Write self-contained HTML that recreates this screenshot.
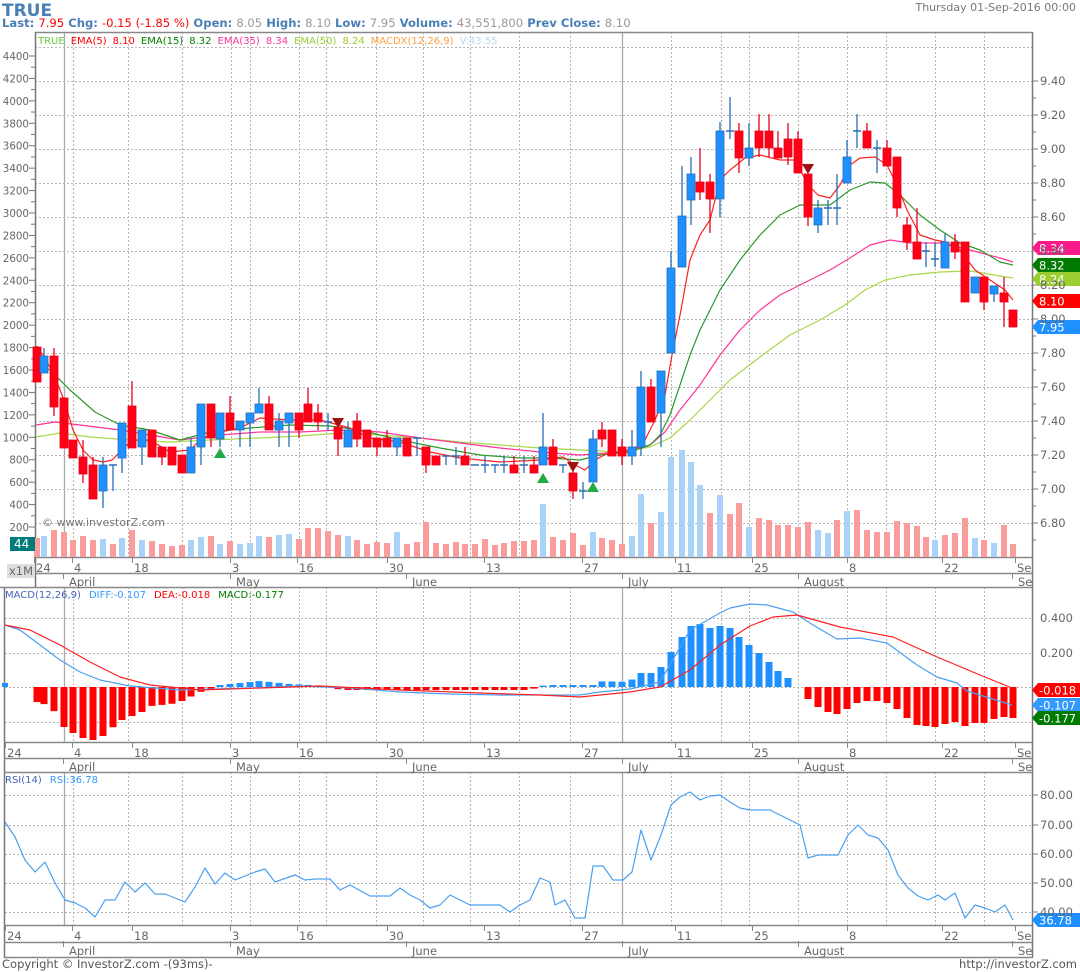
<!DOCTYPE html>
<html><head><meta charset="utf-8">
<style>
html,body{margin:0;padding:0;background:#fff;width:1080px;height:972px;overflow:hidden}
svg{display:block;font-family:"DejaVu Sans","Liberation Sans",sans-serif}
</style></head>
<body>
<svg id="s" width="1080" height="972" viewBox="0 0 1080 972" xmlns="http://www.w3.org/2000/svg">
<g id="grid"></g>
<g id="draw"></g>
<!-- header -->
<text x="2" y="16" font-size="17" font-weight="bold" fill="#4a7fb5">TRUE</text>
<text x="2" y="27" font-size="11.6" font-weight="bold" fill="#4a7fb5">Last: <tspan fill="#f00" font-weight="normal">7.95</tspan> Chg: <tspan fill="#f00" font-weight="normal">-0.15 (-1.85 %)</tspan> Open: <tspan fill="#999" font-weight="normal">8.05</tspan> High: <tspan fill="#999" font-weight="normal">8.10</tspan> Low: <tspan fill="#999" font-weight="normal">7.95</tspan> Volume: <tspan fill="#999" font-weight="normal">43,551,800</tspan> Prev Close: <tspan fill="#999" font-weight="normal">8.10</tspan></text>
<text x="1076" y="11" font-size="11" fill="#777" text-anchor="end">Thursday 01-Sep-2016 00:00</text>
<!-- legend -->
<text x="38" y="44" font-size="10"><tspan fill="#66cc33">TRUE</tspan><tspan fill="#f00" dx="6">EMA(5)</tspan><tspan fill="#f00" dx="6">8.10</tspan><tspan fill="#008000" dx="6">EMA(15)</tspan><tspan fill="#008000" dx="6">8.32</tspan><tspan fill="#ff3399" dx="6">EMA(35)</tspan><tspan fill="#ff3399" dx="6">8.34</tspan><tspan fill="#9acd32" dx="6">EMA(50)</tspan><tspan fill="#9acd32" dx="6">8.24</tspan><tspan fill="#ffa040" dx="6">MACDX(12,26,9)</tspan><tspan fill="#b8d8e8" dx="6">V:43.55</tspan></text>
<text x="42" y="526" font-size="11" fill="#777">© www.investorZ.com</text>
<text x="5" y="598" font-size="10"><tspan fill="#4466bb">MACD(12,26,9)</tspan><tspan fill="#3399ff" dx="8">DIFF:-0.107</tspan><tspan fill="#f00" dx="8">DEA:-0.018</tspan><tspan fill="#008000" dx="8">MACD:-0.177</tspan></text>
<text x="5" y="783" font-size="10"><tspan fill="#4466bb">RSI(14)</tspan><tspan fill="#3399ff" dx="8">RSI:36.78</tspan></text>
<g id="labels" font-size="11.5" fill="#666"></g>
<g id="llabels" font-size="10.3" fill="#666"></g>
<text x="2" y="968" font-size="11.5" fill="#555">Copyright © InvestorZ.com  -(93ms)-</text>
<text x="1077" y="968" font-size="11.5" fill="#555" text-anchor="end">http://investorZ.com</text>
</svg>
<script>
var NS="http://www.w3.org/2000/svg";
function el(p,t,a,txt){var e=document.createElementNS(NS,t);for(var k in a)e.setAttribute(k,a[k]);if(txt!=null)e.textContent=txt;document.getElementById(p).appendChild(e);return e;}
function line(p,x1,y1,x2,y2,c,w,d){var a={x1:x1,y1:y1,x2:x2,y2:y2,stroke:c,"stroke-width":w||1};if(d)a["stroke-dasharray"]=d;return el(p,"line",a);}
function txt(x,y,s,anchor,fill,g){var a={x:x,y:y};if(anchor)a["text-anchor"]=anchor;if(fill)a.fill=fill;return el(g||"labels","text",a,s);}
var G="#b4b4b4",DS="2,2",B="#888";
var vg=[73,128,182,231,250,299,326,376,423,470,519,570,671,721,749,798,847,886,935,984];
var panels=[[32,557],[587,742],[772,925]];
panels.forEach(function(p){vg.forEach(function(x){line("grid",x+.5,p[0],x+.5,p[1],G,1,DS);});
 [64,622].forEach(function(x){line("grid",x+.5,p[0],x+.5,p[1],"#aaa",1.3);});});
for(var y=47;y<=523;y+=34)line("grid",35,y+.5,1032,y+.5,G,1,DS);
[618,653,687,722].forEach(function(y){line("grid",5,y+.5,1032,y+.5,G,1,DS);});
[795,825,854,883,912].forEach(function(y){line("grid",5,y+.5,1032,y+.5,G,1,DS);});
line("grid",35,32.5,1032,32.5,B,1.5);
line("grid",35.5,32,35.5,587,"#777",1.5);
line("grid",1032.5,32,1032.5,958,"#777",1.5);
line("grid",35,557.5,1032,557.5,B,1.5);
line("grid",35,573.5,1032,573.5,B,1.5);
line("grid",0,587.5,1032,587.5,B,1.5);
line("grid",4.5,587,4.5,958,"#777",1.5);
[742,758,772,925,942,957].forEach(function(y){line("grid",4,y+.5,1032,y+.5,B,1.5);});
var dl=[[37,"24"],[75,"4"],[135,"18"],[233,"3"],[300,"16"],[390,"30"],[487,"13"],[585,"27"],[678,"11"],[755,"25"],[850,"8"],[945,"22"],[1018,"Se"]];
var ml=[[69,"April"],[236,"May"],[412,"June"],[628,"July"],[804,"August"],[1018,"Se"]];
[[557,571,585],[742,756,770],[925,939,954]].forEach(function(r,i){
 dl.forEach(function(d){var x=d[0];if(i>0&&d[1]=="24")x=8;line("grid",x-2.5,r[0],x-2.5,r[0]+6,B,1);txt(x-1,r[1]+1,d[1]);});
 ml.forEach(function(m){line("grid",m[0]-5.5,r[1]+2,m[0]-5.5,r[1]+8,B,1);txt(m[0],r[2]+1,m[1]);});
});
var vals=[4400,4200,4000,3800,3600,3400,3200,3000,2800,2600,2400,2200,2000,1800,1600,1400,1200,1000,800,600,400,200];
vals.forEach(function(v,i){var y=56+i*22.43;txt(29,y+4,String(v),"end",null,"llabels");line("grid",29,y,35,y,"#777",1);line("grid",31,y+11.2,35,y+11.2,"#777",1);});
var pr=["9.40","9.20","9.00","8.80","8.60","8.40","8.20","8.00","7.80","7.60","7.40","7.20","7.00","6.80"];
pr.forEach(function(p,i){var y=81+i*34;line("grid",1032,y,1038,y,"#777",1);line("grid",1032,y+17,1036,y+17,"#777",1);txt(1040,y+4,p);});
txt(1040,622,"0.400");txt(1040,657,"0.200");
["80.00","70.00","60.00","50.00","40.00"].forEach(function(p,i){var y=[795,825,854,883,912][i];line("grid",1032,y,1038,y,"#777",1);txt(1040,y+4,p);});
var C=[
[37,'r',347,382,346,382,538,'r'],[44,'b',356,373,348,373,536,'b'],[54,'r',356,407,348,416,530,'r'],[64,'r',398,448,398,448,532,'r'],
[73,'r',440,458,440,458,540,'r'],[83,'r',457,474,440,483,536,'r'],[93,'r',465,499,457,499,540,'r'],[103,'b',465,491,457,508,539,'b'],
[113,'c',465,465,465,491,544,'r'],[122,'b',423,458,423,473,538,'b'],[132,'r',406,448,381,448,530,'r'],[142,'b',430,447,430,465,540,'b'],
[152,'r',430,457,430,457,541,'r'],[162,'r',447,457,447,465,544,'r'],[172,'r',447,465,447,465,546,'r'],[182,'r',455,473,455,473,545,'r'],
[191,'b',447,473,438,473,540,'b'],[201,'b',404,447,404,465,537,'b'],[211,'r',404,438,404,447,536,'r'],[220,'b',413,439,413,447,544,'b'],
[230,'r',413,430,396,430,541,'r'],[240,'b',421,430,421,447,544,'b'],[250,'b',413,423,413,447,543,'b'],[259,'b',404,413,388,413,536,'b'],
[269,'r',404,430,396,430,537,'r'],[279,'b',421,430,413,447,535,'b'],[289,'b',413,423,413,447,534,'b'],[299,'r',413,430,413,438,539,'r'],
[308,'r',404,422,388,422,528,'r'],[318,'r',413,422,404,430,528,'r'],[328,'c',422,422,413,430,531,'r'],[338,'r',427,439,427,456,535,'r'],
[348,'b',430,447,422,447,536,'b'],[357,'r',421,439,413,447,540,'r'],[367,'r',430,447,430,447,544,'r'],[377,'r',438,447,438,456,542,'r'],
[387,'r',438,447,430,447,543,'r'],[397,'b',438,447,438,456,532,'b'],[407,'r',438,456,438,456,544,'r'],[417,'c',438,438,438,456,542,'r'],
[426,'r',447,465,447,473,522,'r'],[436,'r',456,465,456,465,543,'r'],[446,'c',456,456,456,465,544,'r'],[456,'c',456,456,447,465,542,'r'],
[465,'r',456,465,447,465,544,'r'],[475,'c',465,465,465,465,544,'r'],[485,'c',465,465,456,473,539,'r'],[495,'c',465,465,465,473,545,'r'],
[504,'c',465,465,456,473,543,'r'],[514,'r',465,473,456,473,541,'r'],[524,'c',465,465,456,473,541,'r'],[534,'r',465,473,456,473,540,'r'],
[543,'b',447,465,413,465,504,'b'],[553,'r',447,465,439,465,537,'r'],[563,'c',465,465,465,473,540,'r'],[573,'r',473,491,465,499,533,'r'],
[583,'c',491,491,482,499,545,'r'],[593,'b',439,482,430,482,532,'b'],[602,'r',430,439,422,447,538,'r'],[612,'r',430,456,430,456,540,'r'],
[622,'r',447,456,439,465,544,'r'],[632,'b',447,456,430,465,536,'b'],[641,'b',387,447,371,456,494,'b'],[651,'r',387,422,379,422,523,'r'],
[661,'b',371,413,371,447,512,'b'],[671,'b',268,353,251,353,457,'b'],[682,'b',216,267,166,267,450,'b'],[691,'b',174,200,157,225,462,'b'],
[700,'r',182,192,148,200,485,'b'],[710,'r',182,199,174,233,513,'r'],[720,'b',131,199,122,217,495,'b'],[730,'c',131,131,97,139,514,'r'],
[739,'r',131,158,123,173,503,'r'],[749,'b',148,158,123,166,527,'b'],[759,'r',131,148,114,157,518,'r'],[769,'r',131,148,114,157,520,'r'],
[778,'r',148,158,131,158,525,'r'],[788,'r',139,157,123,165,525,'r'],[798,'r',139,173,131,173,527,'r'],[808,'r',174,217,174,226,522,'r'],
[818,'b',208,225,200,233,530,'b'],[828,'c',208,208,200,225,533,'b'],[837,'c',208,208,174,225,520,'r'],[847,'b',157,183,140,183,511,'b'],
[857,'c',131,131,114,148,510,'r'],[867,'r',131,148,123,148,530,'r'],[877,'c',148,148,140,173,532,'r'],[887,'r',148,166,140,166,532,'r'],
[897,'r',157,208,157,217,521,'r'],[907,'r',225,242,217,250,523,'r'],[917,'r',242,259,208,259,526,'r'],[926,'c',251,251,242,267,537,'r'],
[935,'c',259,259,242,267,540,'b'],[945,'b',242,268,234,268,535,'r'],[955,'r',242,252,234,259,533,'r'],[965,'r',242,302,242,302,518,'r'],
[975,'b',277,293,277,293,538,'b'],[984,'r',277,302,277,310,540,'r'],[994,'b',286,294,286,302,543,'b'],[1004,'r',293,302,277,327,525,'r'],
[1013,'r',310,327,310,327,544,'r']];
C.forEach(function(c){el("draw","rect",{x:c[0]-3,y:c[6],width:6,height:557-c[6],fill:c[7]=='b'?'#a8d2f8':'#fb9c9c'});});
function poly(pts,col,w){el("draw","polyline",{points:pts.map(function(p){return p.join(",")}).join(" "),fill:"none",stroke:col,"stroke-width":w||1.2,"stroke-linejoin":"round"});}
poly([[36,437],[60,433],[90,437],[130,440],[170,442],[210,440],[260,438],[300,436],[340,433],[380,435],[420,438],[460,442],[500,445],[540,448],[580,450],[620,452],[650,447],[670,438],[690,420],[710,400],[730,380],[760,357],[790,335],[820,320],[845,305],[865,290],[885,280],[910,275],[940,272],[970,271],[1000,276],[1013,278]],"#a8d848");
poly([[36,425],[55,422],[80,425],[120,430],[150,435],[180,440],[220,435],[260,432],[300,432],[340,430],[380,432],[420,438],[460,443],[500,448],[540,452],[580,455],[620,452],[650,445],[665,432],[680,410],[700,385],[720,355],[740,330],[760,310],[780,295],[800,285],[830,270],[850,258],[870,245],[890,240],[910,243],[940,243],[970,250],[1000,258],[1013,262]],"#ff3399");
poly([[36,363],[50,370],[70,390],[95,412],[120,425],[150,430],[180,440],[210,432],[250,428],[290,425],[330,426],[360,430],[400,440],[440,448],[480,455],[520,458],[550,458],[580,460],[600,455],[630,452],[650,445],[660,435],[670,415],[680,385],[690,355],[700,330],[720,290],[740,260],[760,235],[780,215],[800,205],[830,205],[850,190],[870,182],[885,183],[900,195],[920,215],[940,230],[960,243],[980,250],[1000,262],[1013,265]],"#2a9a2a");
poly([[36,347],[44,356],[54,375],[64,400],[73,430],[83,450],[93,460],[103,462],[112,460],[122,450],[132,440],[150,440],[170,452],[190,450],[200,440],[220,432],[240,428],[260,418],[290,420],[320,420],[350,428],[370,438],[400,442],[430,452],[460,458],[500,462],[540,460],[563,457],[575,465],[585,470],[595,460],[610,452],[630,452],[645,440],[655,420],[665,395],[672,355],[681,310],[690,260],[700,235],[710,220],[720,180],[730,170],[745,158],[760,155],[780,160],[795,160],[808,185],[818,195],[830,198],[840,185],[850,165],[860,158],[875,157],[887,165],[897,185],[907,210],[920,235],[935,240],[945,242],[960,250],[975,270],[990,280],[1005,290],[1013,300]],"#ff2020");
C.forEach(function(c){var x=c[0],blue=c[1]!='r';var wc=blue?'#2a6db5':'#e8001c';
 line("draw",x,c[4],x,c[5],wc,1.3);
 if(c[1]=='c'){line("draw",x-4,c[2],x+4,c[2],wc,1.5);}
 else el("draw","rect",{x:x-4,y:c[2],width:8,height:Math.max(1,c[3]-c[2]),fill:blue?'#1e90ff':'#ff0016',stroke:blue?'#2a6db5':'#e8001c','stroke-width':0.8});});
[[338,423],[573,467],[808,169]].forEach(function(t){el("draw","polygon",{points:(t[0]-6)+","+(t[1]-5)+" "+(t[0]+6)+","+(t[1]-5)+" "+t[0]+","+(t[1]+5),fill:"#a01010"});});
[[220,453],[543,478],[593,487]].forEach(function(t){el("draw","polygon",{points:(t[0]-6)+","+(t[1]+5)+" "+(t[0]+6)+","+(t[1]+5)+" "+t[0]+","+(t[1]-5),fill:"#22aa44"});});
var H=[[5,683],[30,700],[47,705],[55,712],[64,727],[73,733],[83,738],[93,740],[103,736],[112,728],[122,720],[132,716],[142,712],[151,706],[171,704],[180,702],[190,697],[200,692],[210,690],[220,685],[260,681],[290,684],[330,686],[340,690],[530,690],[545,685],[593,685],[603,681],[620,682],[630,681],[641,673],[651,673],[661,667],[671,652],[682,637],[691,626],[700,624],[710,628],[720,626],[730,628],[739,637],[749,645],[759,653],[769,662],[778,671],[788,678],[798,687],[808,699],[818,707],[828,712],[837,714],[847,709],[857,703],[867,701],[877,701],[887,703],[897,709],[907,718],[917,725],[926,726],[935,727],[945,724],[955,722],[965,726],[975,723],[984,723],[994,719],[1004,717],[1013,718]];
function interp(x){for(var i=0;i<H.length-1;i++){if(x>=H[i][0]&&x<=H[i+1][0]){var t=(x-H[i][0])/(H[i+1][0]-H[i][0]);return H[i][1]+t*(H[i+1][1]-H[i][1]);}}return x<H[0][0]?H[0][1]:H[H.length-1][1];}
el("draw","rect",{x:2,y:683,width:6,height:4,fill:"#1e90ff"});
C.forEach(function(c){var x=c[0];if(x==798)return;var v=interp(x);var z=687;
 if(Math.abs(v-z)<1)v=v<z?z-2:z+2;
 if(v<z)el("draw","rect",{x:x-3.5,y:v,width:7,height:z-v,fill:"#1e90ff"});
 else el("draw","rect",{x:x-3.5,y:z,width:7,height:v-z,fill:"#ff0000"});});
poly([[5,625],[20,630],[40,645],[60,660],[80,672],[100,680],[130,686],[180,690],[250,688],[300,686],[350,688],[400,692],[450,694],[500,695],[550,695],[580,695],[600,692],[630,689],[660,682],[690,630],[720,613],[730,608],[750,604],[767,605],[793,612],[813,625],[837,639],[860,638],[887,643],[917,665],[937,677],[957,683],[967,691],[1012,705]],"#4aa0f0");
poly([[5,625],[30,630],[60,645],[90,662],[120,677],[150,685],[200,690],[260,688],[320,686],[400,690],[480,693],[540,695],[580,697],[630,692],[660,687],[690,670],[720,645],[750,626],[773,617],[797,615],[840,627],[893,637],[937,657],[980,675],[1012,688]],"#ff2020");
poly([[5,822],[15,837],[25,860],[35,872],[45,862],[55,883],[65,900],[75,903],[85,908],[95,917],[105,900],[115,900],[125,882],[135,892],[145,883],[155,894],[165,894],[175,898],[185,902],[195,887],[205,868],[215,884],[225,873],[235,880],[255,872],[265,869],[275,882],[295,875],[305,880],[315,879],[330,879],[340,890],[350,885],[370,896],[390,896],[400,888],[410,895],[420,900],[430,908],[440,905],[450,895],[460,900],[470,905],[480,905],[500,905],[510,912],[520,905],[530,900],[540,878],[550,882],[555,905],[565,900],[575,918],[585,918],[593,866],[603,866],[613,880],[623,880],[632,872],[641,830],[651,860],[661,835],[671,805],[680,797],[690,792],[700,800],[710,796],[720,795],[730,802],[740,808],[750,810],[760,810],[770,810],[780,815],[790,820],[800,825],[808,858],[818,855],[828,855],[838,855],[848,835],[858,825],[868,835],[878,838],[888,850],[898,875],[908,888],[918,896],[928,900],[938,895],[945,900],[955,893],[965,918],[975,905],[985,908],[995,912],[1005,905],[1013,920]],"#4aa0f0");
function tag(y,col,s){el("draw","polygon",{points:"1032,"+y+" 1038,"+(y-7)+" 1080,"+(y-7)+" 1080,"+(y+7)+" 1038,"+(y+7),fill:col});el("draw","text",{x:1039,y:y+4.5,"font-size":11.5,fill:"#fff"},s);}
tag(248,"#ff1a8c","8.34");tag(265,"#007a00","8.32");tag(279,"#9acd32","8.24");tag(301,"#ff0000","8.10");tag(327,"#1e90ff","7.95");
tag(690,"#ff0000","-0.018");tag(705,"#3399ff","-0.107");tag(718,"#007a00","-0.177");
tag(920,"#1e90ff","36.78");
el("draw","rect",{x:10,y:537,width:25,height:14,fill:"#007b7b"});
el("draw","text",{x:14,y:548,"font-size":12,fill:"#fff"},"44");
el("draw","rect",{x:7,y:564,width:27,height:14,fill:"#ddd"});
el("draw","text",{x:9,y:575,"font-size":11.5,fill:"#666"},"x1M");
</script>
</body></html>
